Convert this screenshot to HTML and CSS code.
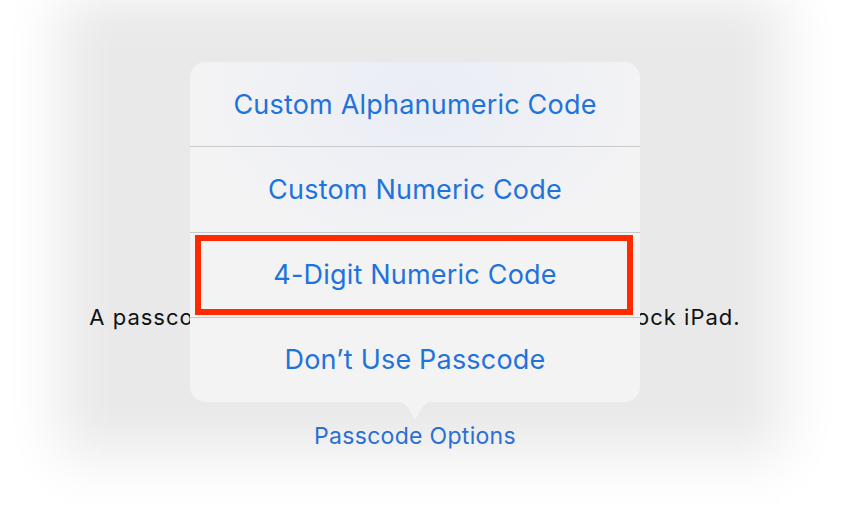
FILE: index.html
```html
<!DOCTYPE html>
<html lang="en">
<head>
<meta charset="utf-8">
<title>Passcode Options</title>
<link rel="stylesheet" href="styles.css">
</head>
<body>
<div class="scene">
  <p class="desc">A passcode is required to use Touch ID or to unlock iPad.</p>
  <p class="options">Passcode Options</p>

  <div class="popover">
    <div class="row">Custom Alphanumeric Code</div>
    <div class="row">Custom Numeric Code</div>
    <div class="row row-hl">4-Digit Numeric Code<span class="hl"></span></div>
    <div class="row">Don’t Use Passcode</div>
    <svg class="arrow" width="48" height="20" viewBox="0 0 48 20">
      <path d="M0 0 C11 0 15 3 19 10 L22 16 Q24 19.5 26 16 L29 10 C33 3 37 0 48 0 Z" fill="#f3f3f4"/>
    </svg>
  </div>
</div>
</body>
</html>
```

FILE: styles.css
```css
html, body {
  margin: 0;
  padding: 0;
  background: #ffffff;
}

.scene {
  position: relative;
  width: 843px;
  height: 515px;
  box-sizing: border-box;
  padding: 303px 13px 0 0;
  overflow: hidden;
  background: #e9e9ea;
  box-shadow:
    inset 90px 0 60px -30px #ffffff,
    inset -90px 0 60px -30px #ffffff,
    inset 0 -90px 60px -30px #ffffff,
    inset 0 40px 60px -40px #f6f6f6;
  font-family: Inter, "Noto Sans", "Liberation Sans", sans-serif;
  text-align: center;
}

.desc {
  margin: 0;
  font-size: 22px;
  line-height: 28px;
  color: #111111;
  letter-spacing: 1px;
  white-space: nowrap;
}

.options {
  margin: 91px 0 0 0;
  font-size: 23px;
  line-height: 28px;
  color: #2a6fd3;
  letter-spacing: 0.3px;
}

.popover {
  position: absolute;
  left: 190px;
  top: 62px;
  width: 450px;
  height: 340px;
  border-radius: 15px;
  background:
    radial-gradient(ellipse 220px 160px at 52% 10%, rgba(225, 232, 248, 0.55), rgba(225, 232, 248, 0) 100%),
    #f3f3f4;
  display: flex;
  flex-direction: column;
}

.row {
  position: relative;
  flex: 1;
  display: flex;
  align-items: center;
  justify-content: center;
  font-size: 27px;
  color: #1f73dc;
  letter-spacing: 0.2px;
}

.row + .row {
  border-top: 1px solid #c9c9cd;
}

.hl {
  position: absolute;
  left: 5px;
  right: 7px;
  top: 2px;
  bottom: 2px;
  border: 6px solid #ff2a00;
}

.arrow {
  position: absolute;
  left: 201px;
  bottom: -19px;
  display: block;
}
```
